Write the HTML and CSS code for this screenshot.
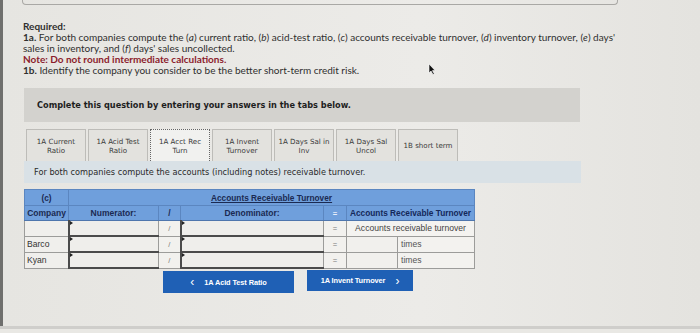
FILE: index.html
```html
<!DOCTYPE html>
<html>
<head>
<meta charset="utf-8">
<link rel="stylesheet" href="styles.css">
</head>
<body>
<div class="screen">
  <div class="topbox"></div>
  <div class="required">
    <div class="b">Required:</div>
    <div><span class="b">1a.</span> For both companies compute the (<i>a</i>) current ratio, (<i>b</i>) acid-test ratio, (<i>c</i>) accounts receivable turnover, (<i>d</i>) inventory turnover, (<i>e</i>) days'</div>
    <div>sales in inventory, and (<i>f</i>) days' sales uncollected.</div>
    <div class="note">Note: Do not round intermediate calculations.</div>
    <div><span class="b">1b.</span> Identify the company you consider to be the better short-term credit risk.</div>
  </div>
  <div class="banner">Complete this question by entering your answers in the tabs below.</div>
  <div class="tabs">
    <div class="tab">1A Current<br>Ratio</div>
    <div class="tab">1A Acid Test<br>Ratio</div>
    <div class="tab active">1A Acct Rec<br>Turn</div>
    <div class="tab">1A Invent<br>Turnover</div>
    <div class="tab">1A Days Sal in<br>Inv</div>
    <div class="tab">1A Days Sal<br>Uncol</div>
    <div class="tab">1B short term</div>
  </div>
  <div class="panel">For both companies compute the accounts (including notes) receivable turnover.</div>
  <table class="grid">
    <colgroup>
      <col class="c-co"><col class="c-num"><col class="c-op"><col class="c-den"><col class="c-eq"><col class="c-val"><col class="c-unit">
    </colgroup>
    <tr class="h1">
      <th>(c)</th>
      <th colspan="6"><span class="u">Accounts Receivable Turnover</span></th>
    </tr>
    <tr class="h2">
      <th>Company</th>
      <th>Numerator:</th>
      <th>/</th>
      <th>Denominator:</th>
      <th class="eqh">=</th>
      <th colspan="2" class="res">Accounts Receivable Turnover</th>
    </tr>
    <tr>
      <td class="co"></td>
      <td class="in"></td>
      <td class="op">/</td>
      <td class="in"></td>
      <td class="op">=</td>
      <td colspan="2" class="lbl">Accounts receivable turnover</td>
    </tr>
    <tr>
      <td class="co">Barco</td>
      <td class="in"></td>
      <td class="op">/</td>
      <td class="in"></td>
      <td class="op">=</td>
      <td class="val"></td>
      <td class="unit">times</td>
    </tr>
    <tr>
      <td class="co">Kyan</td>
      <td class="in"></td>
      <td class="op">/</td>
      <td class="in"></td>
      <td class="op">=</td>
      <td class="val"></td>
      <td class="unit">times</td>
    </tr>
  </table>
  <div class="nav">
    <div class="btn prev"><span class="chev">&lsaquo;</span>1A Acid Test Ratio</div>
    <div class="btn next">1A Invent Turnover<span class="chev">&rsaquo;</span></div>
  </div>
  <svg class="cursor" width="8" height="11" viewBox="0 0 8 11"><path d="M1 0 L1 9 L3 7 L5 10.5 L6.3 9.8 L4.4 6.6 L7 6.4 Z" fill="#111" stroke="#fff" stroke-width="0.6"/></svg>
</div>
</body>
</html>
```
FILE: styles.css
```css
html, body {
  margin: 0;
  padding: 0;
}
body {
  width: 700px;
  height: 333px;
  overflow: hidden;
  background: #e9e8e4;
}
.screen {
  position: relative;
  width: 697px;
  height: 326px;
  border-left: 3px solid #6f6f6d;
  background: linear-gradient(90deg, #e6e5e1 0%, #ecebe8 60%, #e4e3df 100%);
  box-shadow: 0 3px 0 #cfcecb;
}
.topbox {
  margin-left: 19px;
  width: 594px;
  height: 4px;
  border: 1px solid #a9a8a5;
  border-top: none;
  border-radius: 0 0 4px 4px;
}
.required {
  margin: 16px 0 0 20px;
  font-family: Lato, "Open Sans", sans-serif;
  font-size: 10px;
  line-height: 11px;
  color: #2f2f2f;
}
.b { font-weight: bold; }
.note { color: #8b1c2c; font-weight: bold; }
.banner {
  margin: 12px 0 0 21px;
  width: 543px;
  height: 34px;
  padding-left: 13px;
  background: #d3d2ce;
  font-family: "DejaVu Sans", Verdana, sans-serif;
  font-weight: bold;
  font-size: 8.2px;
  line-height: 34px;
  color: #1e1e1e;
}
.tabs {
  display: flex;
  gap: 2px;
  margin: 7px 0 0 23px;
  height: 32px;
}
.tab {
  width: 58px;
  border: 1px solid #bdbcb8;
  border-bottom: none;
  background: #e3e2de;
  font-family: "DejaVu Sans", Verdana, sans-serif;
  font-size: 7.1px;
  line-height: 9px;
  color: #3a3a3a;
  text-align: center;
  display: flex;
  align-items: center;
  justify-content: center;
}
.tab.active {
  background: #f1f1ef;
  border: 1px dotted #666;
  border-bottom: none;
}
.panel {
  margin-left: 21px;
  width: 547px;
  height: 22px;
  padding-left: 10px;
  background: #d9e1e6;
  font-family: "DejaVu Sans", Verdana, sans-serif;
  font-size: 8.2px;
  line-height: 22px;
  color: #2a2a2a;
}
.grid {
  margin: 6px 0 0 21px;
  border-collapse: collapse;
  table-layout: fixed;
  width: 450px;
  font-family: "Liberation Sans", Arial, sans-serif;
  font-size: 8.6px;
  color: #333;
}
.c-co { width: 44px; }
.c-num { width: 90px; }
.c-op { width: 22px; }
.c-den { width: 143px; }
.c-eq { width: 23px; }
.c-val { width: 51px; }
.c-unit { width: 77px; }
.grid th {
  background: #6f9fdc;
  color: #1b2a52;
  font-weight: bold;
  font-size: 8.5px;
  border: 1px solid #5b86c0;
  padding: 0;
}
.grid tr.h1 th { height: 15px; font-size: 8.3px; }
.grid tr.h2 th { height: 14px; border-bottom: 1px solid #4f76ad; }
.grid th.eqh { color: #e9eefa; font-size: 7.6px; }
.grid th.res { color: #14285a; font-size: 8.3px; border-left: 1px solid #dfe8f5; }
.u { text-decoration: underline; }
.grid td {
  height: 14px;
  padding: 0;
  border: 1px solid #9c9c9a;
  background: #f0efec;
}
.grid td.co {
  padding-left: 2px;
  color: #333;
}
.grid td.in {
  position: relative;
  background: #efeeeb;
  border: 1px solid #9c9c9a;
  border-bottom: 2px solid #4b4b4b;
  border-left: 2px solid #4b4b4b;
}
.grid td.in::before {
  content: "";
  position: absolute;
  left: 0;
  top: 0;
  border-left: 3px solid #222;
  border-top: 2px solid transparent;
  border-bottom: 2px solid transparent;
}
.grid td.op {
  text-align: center;
  color: #777;
  font-size: 7.6px;
  background: #f2f1ee;
}
.grid td.lbl {
  text-align: center;
  color: #444;
  background: #f4f3f0;
}
.grid td.val { background: #f1f0ed; }
.grid td.unit {
  padding-left: 3px;
  color: #555;
  background: #f3f2ef;
}
.nav {
  display: flex;
  gap: 13px;
  margin: 2px 0 0 160px;
}
.btn {
  height: 21px;
  background: #1f60b5;
  color: #fff;
  font-family: "Liberation Sans", Arial, sans-serif;
  font-weight: bold;
  font-size: 7.4px;
  display: flex;
  align-items: center;
  justify-content: center;
  letter-spacing: -0.1px;
}
.prev { width: 131px; height: 22px; }
.next { width: 106px; margin-top: -1px; }
.chev {
  font-size: 12px;
  font-weight: normal;
}
.prev .chev { margin-right: 10px; }
.next .chev { margin-left: 10px; }
.cursor {
  position: absolute;
  left: 425px;
  top: 64px;
}
```
